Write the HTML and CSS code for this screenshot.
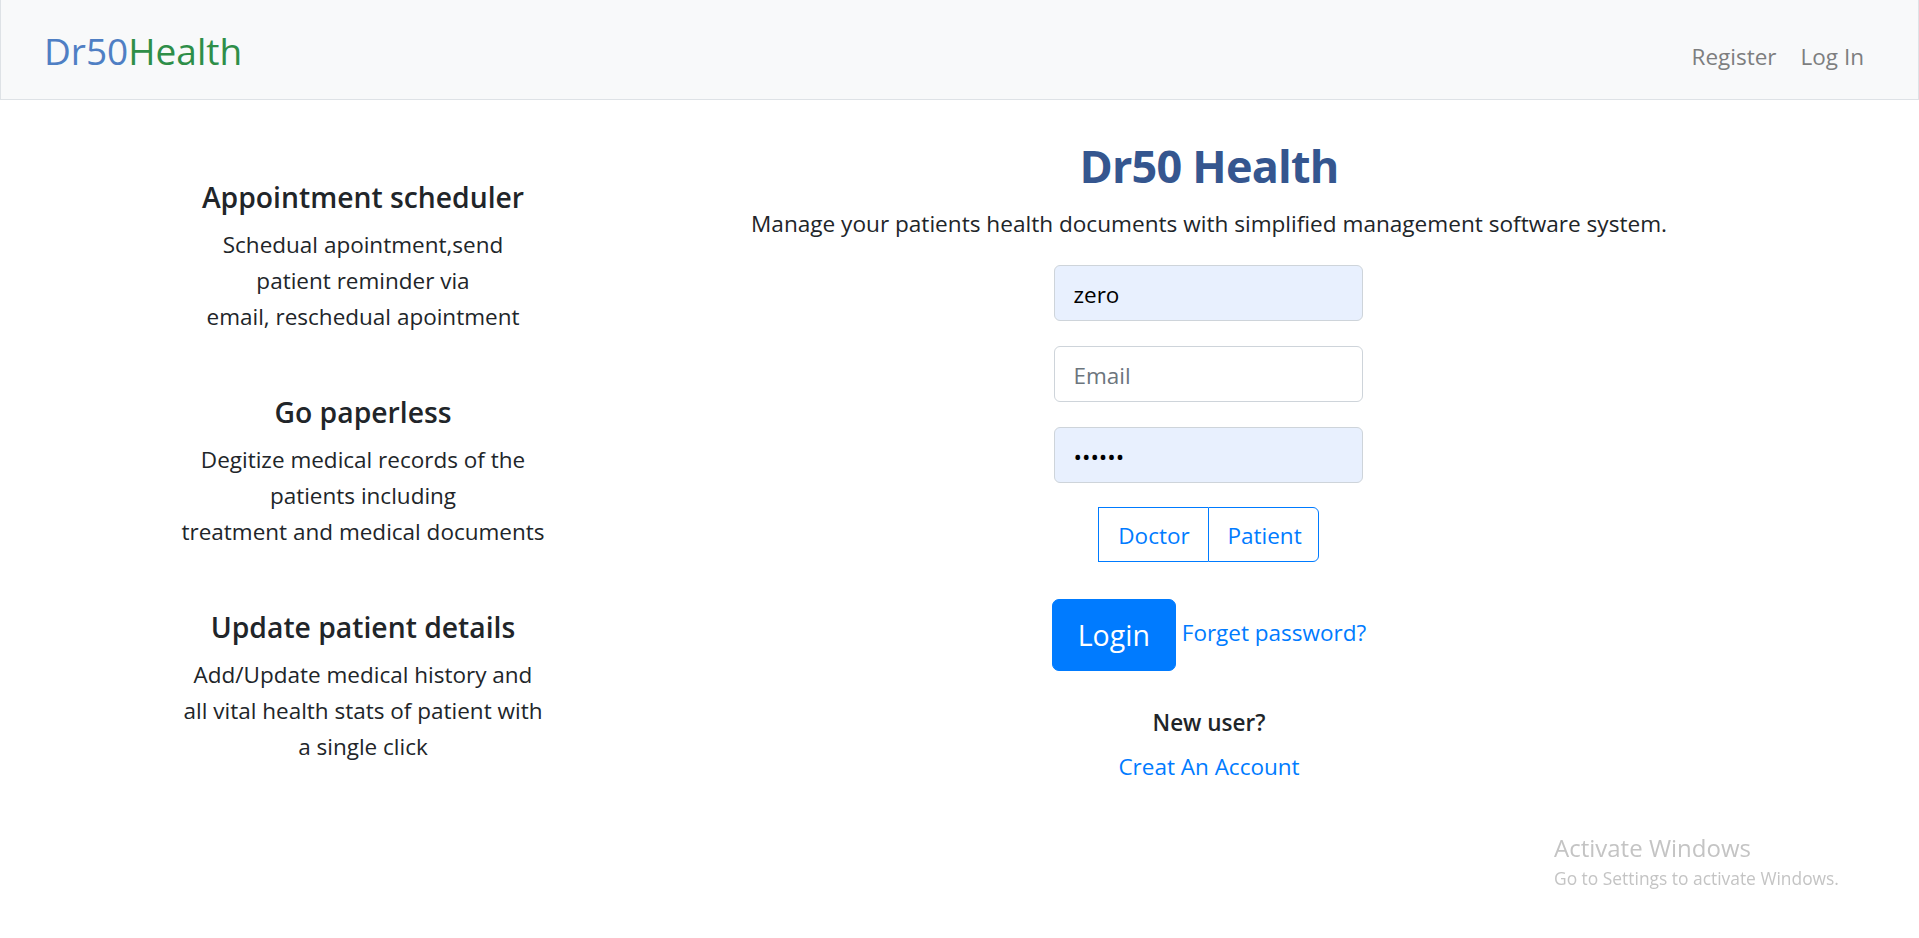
FILE: index.html
```html
<!DOCTYPE html>
<html lang="en">
<head>
<meta charset="utf-8">
<title>Dr50Health</title>
<link rel="stylesheet" href="styles.css">
</head>
<body>
<nav class="navbar">
  <a class="brand" href="#"><span class="brand-dr">Dr50</span><span class="brand-health">Health</span></a>
  <ul class="nav-links">
    <li><a class="nav-link" href="#">Register</a></li>
    <li><a class="nav-link" href="#">Log In</a></li>
  </ul>
</nav>

<main class="main">
  <section class="features">
    <div class="feature">
      <h5 class="feature-title">Appointment scheduler</h5>
      <p class="feature-text">Schedual apointment,send<br>patient reminder via<br>email, reschedual apointment</p>
    </div>
    <div class="feature">
      <h5 class="feature-title">Go paperless</h5>
      <p class="feature-text">Degitize medical records of the<br>patients including<br>treatment and medical documents</p>
    </div>
    <div class="feature">
      <h5 class="feature-title">Update patient details</h5>
      <p class="feature-text">Add/Update medical history and<br>all vital health stats of patient with<br>a single click</p>
    </div>
  </section>

  <section class="login">
    <h2 class="login-title">Dr50 Health</h2>
    <p class="login-sub">Manage your patients health documents with simplified management software system.</p>
    <form class="login-form">
      <input class="field field-filled" type="text" value="zero">
      <input class="field" type="email" placeholder="Email">
      <input class="field field-filled" type="password" value="123456">
      <div class="role-group">
        <span class="role role-first">Doctor</span><span class="role role-last">Patient</span>
      </div>
      <div class="login-row">
        <button class="btn-login" type="button">Login</button>
        <a class="forgot" href="#">Forget password?</a>
      </div>
      <p class="new-user">New user?</p>
      <a class="create" href="#">Creat An Account</a>
    </form>
  </section>
</main>

<div class="activate">
  <div class="activate-title">Activate Windows</div>
  <div class="activate-sub">Go to Settings to activate Windows.</div>
</div>
</body>
</html>
```

FILE: styles.css
```css
* { box-sizing: border-box; }

html, body {
  margin: 0;
  padding: 0;
  background: #ffffff;
}

body {
  font-family: "Open Sans", "Noto Sans", Arial, sans-serif;
  font-size: 22.5px;
  line-height: 36px;
  color: #212529;
}

a { text-decoration: none; }

/* Navbar */
.navbar {
  height: 100px;
  display: flex;
  align-items: baseline;
  justify-content: space-between;
  padding: 32px 42px 0 43px;
  background: #f8f9fa;
  border-left: 1px solid #dee2e6;
  border-right: 1px solid #dee2e6;
  border-bottom: 1px solid #dee2e6;
}

.brand {
  font-size: 37px;
  line-height: 37px;
  font-weight: 400;
}
.brand-dr { color: #4f7fc4; }
.brand-health { color: #2e8e48; }

.nav-links {
  display: flex;
  list-style: none;
  margin: 0;
  padding: 0;
}
.nav-link {
  display: block;
  padding: 0 12px;
  font-size: 22.5px;
  line-height: 36px;
  color: #7d7e7f;
}

/* Main layout */
.main {
  display: grid;
  grid-template-columns: 564px 1128px;
  padding-left: 81px;
}

.features {
  display: flex;
  flex-direction: column;
  gap: 59px;
  padding-top: 79px;
  text-align: center;
}
.feature-title {
  margin: 0 0 12px;
  font-size: 28.3px;
  line-height: 36px;
  font-weight: 600;
}
.feature-text {
  margin: 0;
}

.login {
  display: flex;
  flex-direction: column;
  align-items: center;
  padding-top: 40px;
  text-align: center;
}
.login-title {
  margin: 0 0 14.7px;
  font-size: 45px;
  line-height: 52px;
  letter-spacing: -0.8px;
  font-weight: 700;
  color: #35568f;
}
.login-sub {
  margin: 0 0 24.3px;
  font-size: 22.6px;
  line-height: 34px;
}

.login-form {
  display: flex;
  flex-direction: column;
  align-items: center;
}

.field {
  width: 309px;
  height: 56px;
  margin: 0 0 25px;
  padding: 4px 18px 0;
  border: 1px solid #ced4da;
  border-radius: 6px;
  background: #ffffff;
  font-family: inherit;
  font-size: 22.5px;
  color: #495057;
  outline: none;
}
.field::placeholder { color: #6c757d; opacity: 1; }
.field-filled {
  background: #e8f0fe;
  color: #000000;
}

.role-group {
  display: flex;
  margin-top: -1px;
}
.role {
  display: block;
  height: 55px;
  padding: 1px 18px 0;
  border: 1px solid #007bff;
  line-height: 53px;
  color: #007bff;
  font-size: 22.5px;
}
.role-first { border-right: none; width: 110px; }
.role-last { border-radius: 0 6px 6px 0; width: 111px; }

.login-row {
  display: flex;
  align-items: flex-start;
  gap: 6px;
  margin-top: 37px;
}
.btn-login {
  width: 124px;
  height: 72px;
  padding: 2px 0 0;
  border: 1px solid #007bff;
  border-radius: 7px;
  background: #007bff;
  color: #ffffff;
  font-family: inherit;
  font-size: 28.5px;
  line-height: 45px;
}
.forgot {
  margin-top: 16px;
  color: #007bff;
}

.new-user {
  margin: 34.5px 0 8px;
  font-weight: 600;
}
.create {
  color: #007bff;
}

/* Windows activation watermark overlay */
.activate {
  position: fixed;
  left: 1554px;
  top: 834px;
  color: #c4c4c4;
  pointer-events: none;
}
.activate-title {
  font-size: 24px;
  line-height: 28px;
  font-weight: 400;
}
.activate-sub {
  margin-top: 5.5px;
  font-size: 17.4px;
  line-height: 20px;
}
```
